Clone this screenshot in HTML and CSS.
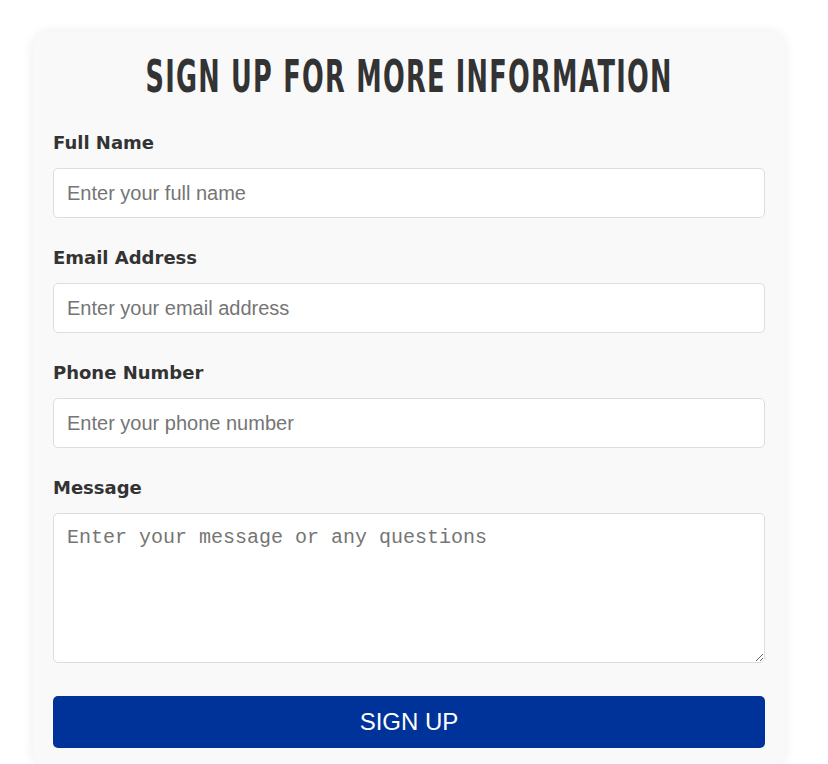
FILE: index.html
```html
<!DOCTYPE html>
<html>
<head>
<meta charset="utf-8">
<link rel="stylesheet" href="styles.css">
</head>
<body>
<div class="card">
  <h1 class="title"><span class="title-text">SIGN UP FOR MORE INFORMATION</span></h1>
  <form class="form">
    <div class="field">
      <label class="label">Full Name</label>
      <input class="input" type="text" placeholder="Enter your full name">
    </div>
    <div class="field">
      <label class="label">Email Address</label>
      <input class="input" type="email" placeholder="Enter your email address">
    </div>
    <div class="field">
      <label class="label">Phone Number</label>
      <input class="input" type="tel" placeholder="Enter your phone number">
    </div>
    <div class="field">
      <label class="label">Message</label>
      <textarea class="textarea" placeholder="Enter your message or any questions"></textarea>
    </div>
    <button class="button" type="button">SIGN UP</button>
  </form>
</div>
</body>
</html>
```
FILE: styles.css
```css
* { box-sizing: border-box; }
html, body { margin: 0; padding: 0; background: #ffffff; }
body { padding-top: 32px; }
.card {
  width: 752px;
  margin-left: 33px;
  background: #f9f9f9;
  border-radius: 16px;
  box-shadow: 0 0 12px rgba(0,0,0,0.08);
  padding: 20px 20px 20px 20px;
}
.title {
  margin: 0 0 29px 0;
  display: flex;
  justify-content: center;
  white-space: nowrap;
  font-family: "DejaVu Sans Condensed", "DejaVu Sans", sans-serif;
  font-stretch: condensed;
  font-weight: 700;
  font-size: 45px;
  line-height: 50px;
  letter-spacing: 2px;
  color: #333333;
}
.title-text {
  display: inline-block;
  flex-shrink: 0;
  transform: scaleX(0.632);
  transform-origin: center;
}
.form { display: flex; flex-direction: column; }
.field { display: flex; flex-direction: column; margin-bottom: 28px; }
.label {
  font-family: "DejaVu Sans", sans-serif;
  font-weight: 700;
  font-size: 18px;
  line-height: 24px;
  color: #333333;
  margin-bottom: 13px;
}
.input, .textarea {
  width: 100%;
  border: 1px solid #dddddd;
  border-radius: 5px;
  background: #ffffff;
  color: #333;
  font-size: 20px;
  padding: 0 13px;
}
.input {
  height: 50px;
  font-family: "Liberation Sans", Arial, sans-serif;
}
.textarea {
  height: 150px;
  padding-top: 12px;
  font-family: "Liberation Mono", monospace;
  resize: vertical;
}
.input::placeholder, .textarea::placeholder { color: #757575; }
.button {
  height: 52px;
  margin-top: 5px;
  width: 100%;
  border: none;
  border-radius: 5px;
  background: #003399;
  color: #ffffff;
  font-family: "Liberation Sans", Arial, sans-serif;
  font-size: 24px;
}
```
